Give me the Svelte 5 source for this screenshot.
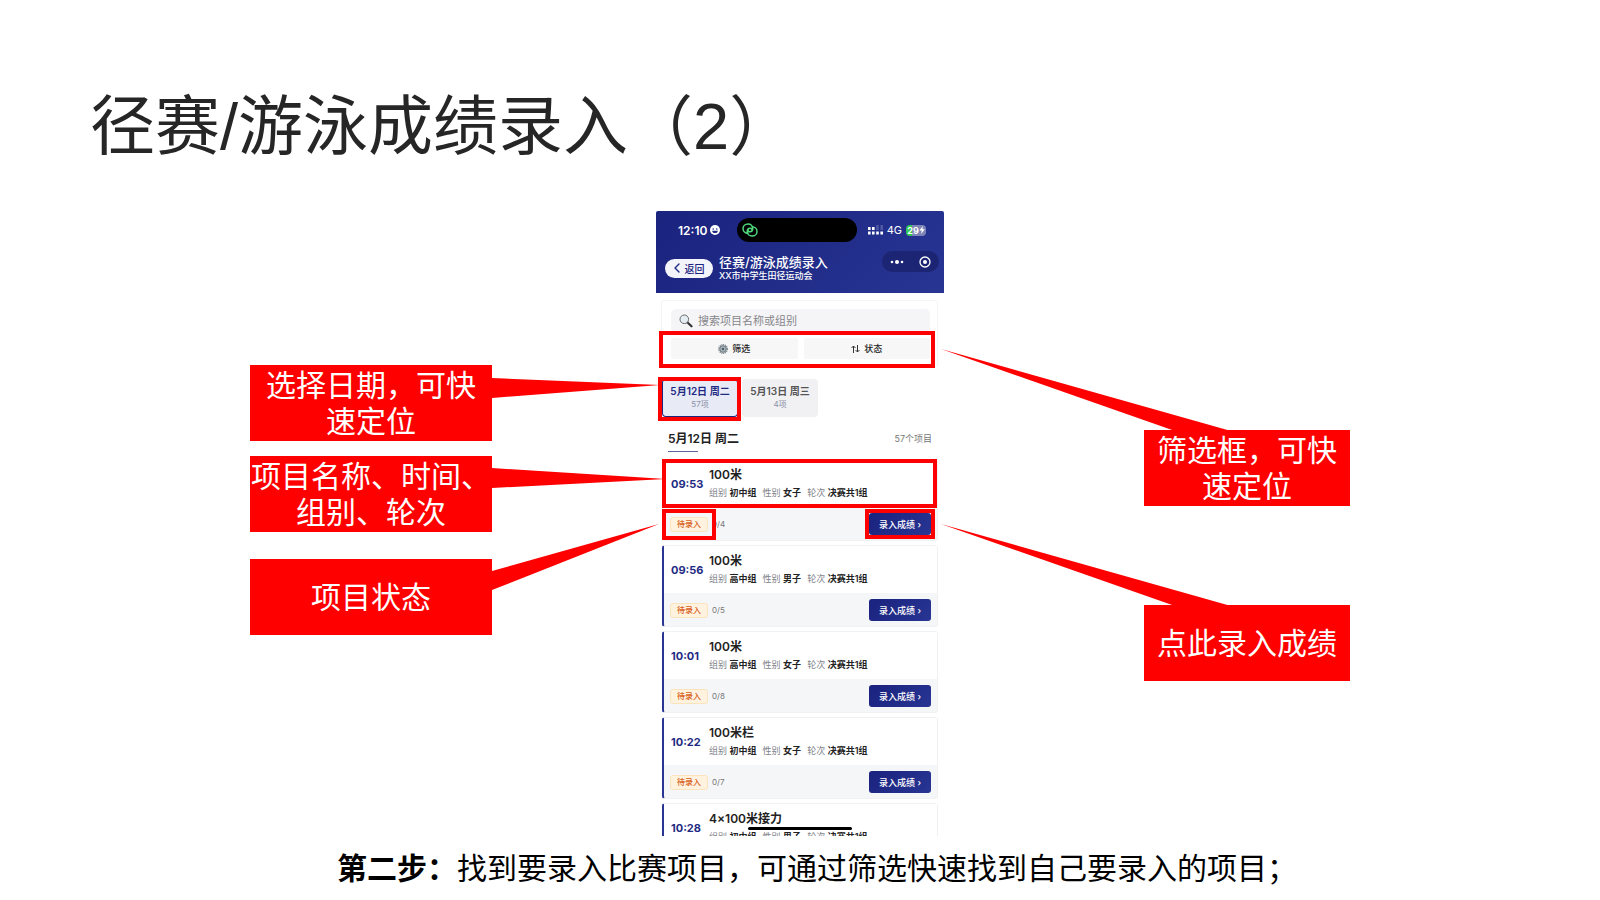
<script>
    let keyword = '';
    let activeDay = 0;

    const days = [
        { label: '5月12日 周二', count: '57项' },
        { label: '5月13日 周三', count: '4项' }
    ];

    /** @type {{time: String, name: String, group: String, sex: String, round: String, done: String}[]} */
    const events = [
        { time: '09:53', name: '100米', group: '初中组', sex: '女子', round: '决赛共1组', done: '0/4' },
        { time: '09:56', name: '100米', group: '高中组', sex: '男子', round: '决赛共1组', done: '0/5' },
        { time: '10:01', name: '100米', group: '高中组', sex: '女子', round: '决赛共1组', done: '0/8' },
        { time: '10:22', name: '100米栏', group: '初中组', sex: '女子', round: '决赛共1组', done: '0/7' },
        { time: '10:28', name: '4×100米接力', group: '初中组', sex: '男子', round: '决赛共1组', done: '' }
    ];
</script>

<main>
    <h1>径赛/游泳成绩录入（2）</h1>

    <div class="stage">
        <div class="notes left">
            <p class="note date">选择日期，可快<br />速定位
                <svg class="tail" width="168" height="76" viewBox="0 0 168 76"><path d="M0 13L168 20L0 33Z" /></svg>
            </p>
            <p class="note item">项目名称、时间、<br />组别、轮次
                <svg class="tail" width="174" height="76" viewBox="0 0 174 76"><path d="M0 12L174 23L0 32Z" /></svg>
            </p>
            <p class="note state">项目状态
                <svg class="tail" width="168" height="76" viewBox="0 0 168 76"><path d="M0 12L167 -35L0 31Z" /></svg>
            </p>
        </div>

        <section class="phone">
            <header>
                <div class="status">
                    <span class="clock">12:10</span>
                    <svg class="face" width="10" height="10" viewBox="0 0 10 10">
                        <circle cx="5" cy="5" r="5" fill="#fff" />
                        <circle cx="3.2" cy="4" r="0.8" fill="#1f2b83" />
                        <circle cx="6.8" cy="4" r="0.8" fill="#1f2b83" />
                        <path d="M2.2 5.7h5.6a2.8 2.4 0 0 1-5.6 0z" fill="#1f2b83" />
                    </svg>
                    <div class="island">
                        <svg width="16" height="14" viewBox="0 0 16 14" fill="none" stroke="#4fd97c" stroke-width="1.5" stroke-linecap="round">
                            <path d="M6 10.2C3.200 10.200 1 8.200 1 5.600C1 3 3.200 1 6 1C8.700 1 10.800 2.900 10.800 5.300C10.800 7.400 9.600 8.800 7.900 8.800C6.700 8.800 6 8 6 7" />
                            <path d="M10 3.800C12.800 3.800 15 5.800 15 8.400C15 11 12.800 13 10 13C7.300 13 5.200 11.100 5.200 8.700C5.200 6.600 6.400 5.200 8.100 5.200C9.300 5.200 10 6 10 7" />
                        </svg>
                    </div>
                    <svg class="signal" width="15" height="10" viewBox="0 0 15 10" fill="#fff">
                        <path d="M0 2h2.600v3H0zM4 2h2.600v3H4zM0 6.500h2.600v3H0zM4 6.500h2.600v3H4zM8.200 6.500h2.600v3H8.200zM12.400 6.500H15v3h-2.600z" />
                        <path d="M8.200 0h2.600v5H8.200zM12.400 0H15v5h-2.600z" opacity="0.2" />
                    </svg>
                    <span class="net">4G</span>
                    <span class="battery">29<svg width="6" height="8" viewBox="0 0 6 8"><path d="M3.800 0L0.400 4.500H2.700L2.200 8L5.700 3.300H3.400Z" fill="#fff" /></svg></span>
                </div>
                <div class="nav">
                    <button class="back" type="button">
                        <svg width="6" height="10" viewBox="0 0 6 10" fill="none" stroke="#1f2b83" stroke-width="1.4" stroke-linecap="round" stroke-linejoin="round"><path d="M5 1L1 5L5 9" /></svg>
                        返回
                    </button>
                    <div class="heading">
                        <h2>径赛/游泳成绩录入</h2>
                        <p>XX市中学生田径运动会</p>
                    </div>
                    <div class="capsule">
                        <button type="button" aria-label="更多">
                            <svg width="14" height="6" viewBox="0 0 14 6" fill="#fff"><circle cx="2" cy="3" r="1.300" /><circle cx="7" cy="3" r="2" /><circle cx="12" cy="3" r="1.300" /></svg>
                        </button>
                        <button type="button" aria-label="关闭">
                            <svg width="12" height="12" viewBox="0 0 12 12"><circle cx="6" cy="6" r="5" fill="none" stroke="#fff" stroke-width="1.300" /><circle cx="6" cy="6" r="2" fill="#fff" /></svg>
                        </button>
                    </div>
                </div>
            </header>

            <div class="search">
                <label class="field">
                    <svg width="14" height="14" viewBox="0 0 14 14" fill="none">
                        <path d="M8.500 8.500L12.500 12.300" stroke="#333" stroke-width="2.200" stroke-linecap="round" />
                        <circle cx="5.300" cy="5.300" r="4.300" fill="#e4eef2" stroke="#666b70" stroke-width="1" />
                    </svg>
                    <input type="text" aria-label="搜索" placeholder="搜索项目名称或组别" bind:value={keyword} />
                </label>
                <div class="filters marked">
                    <button type="button">
                        <svg width="10" height="10" viewBox="0 0 10 10" fill="none">
                            <circle cx="5" cy="5" r="4.300" stroke="#7d878d" stroke-width="1.300" stroke-dasharray="1.100 0.700" />
                            <circle cx="5" cy="5" r="3.300" fill="#a9b6bc" stroke="#66737a" />
                            <circle cx="5" cy="5" r="1.200" fill="#4d5960" />
                        </svg>
                        筛选
                    </button>
                    <button type="button">
                        <svg width="9" height="8" viewBox="0 0 9 8" fill="none" stroke="#333" stroke-width="1"><path d="M2.500 8V1M0.500 3L2.500 1L4.500 3M6.500 0V7M4.500 5L6.500 7L8.500 5" /></svg>
                        状态
                    </button>
                </div>
            </div>

            <div class="days">
                {#each days as day, i}
                    <button type="button" class:active={i === activeDay} class:marked={i === 0} on:click={() => (activeDay = i)}>
                        <b>{day.label}</b>
                        <span>{day.count}</span>
                    </button>
                {/each}
            </div>

            <div class="group">
                <h3>5月12日 周二</h3>
                <span>57个项目</span>
            </div>

            {#each events as event, i}
                <article class:first={i === 0}>
                    <div class="info" class:marked={i === 0}>
                        <time>{event.time}</time>
                        <div>
                            <h4>{event.name}</h4>
                            <p>
                                <span>组别 <b>{event.group}</b></span>
                                <span>性别 <b>{event.sex}</b></span>
                                <span>轮次 <b>{event.round}</b></span>
                            </p>
                        </div>
                    </div>
                    {#if event.done}
                        <div class="action">
                            <span class="badge" class:marked={i === 0}>待录入</span>
                            <span class="done">{event.done}</span>
                            <button type="button" class:marked={i === 0}>录入成绩 <i>›</i></button>
                        </div>
                    {/if}
                </article>
            {/each}

            <div class="home"></div>
        </section>

        <div class="notes right">
            <p class="note">筛选框，可快<br />速定位
                <svg class="tail" width="290" height="82" viewBox="0 0 290 82"><path d="M0 0L290 82H234Z" /></svg>
            </p>
            <p class="note">点此录入成绩
                <svg class="tail" width="290" height="82" viewBox="0 0 290 82"><path d="M0 0L290 82H234Z" /></svg>
            </p>
        </div>
    </div>

    <p class="caption"><b>第二步：</b>找到要录入比赛项目，可通过筛选快速找到自己要录入的项目；</p>
</main>

<style>
    :global(body) {
        margin: 0;
        background: #fff;
    }

    main {
        font-family: "Noto Sans CJK SC", sans-serif;
        color: #000;
    }

    h1, h2, h3, h4, p {
        margin: 0;
    }

    h1 {
        padding: 87px 90px 44px;
        font: 400 65px/80px "Liberation Sans", "Noto Sans CJK SC", sans-serif;
        color: #262626;
    }

    button {
        padding: 0;
        border: 0;
        font: inherit;
        color: inherit;
        background: none;
        white-space: nowrap;
    }

    svg {
        flex: none;
    }

    .stage {
        display: grid;
        grid-template-columns: 1fr 288px 1fr;
    }

    /* red callouts */
    .notes {
        display: flex;
        flex-direction: column;
    }

    .left {
        align-items: flex-end;
        padding: 154px 164px 0 0;
    }

    .right {
        align-items: flex-start;
        gap: 99px;
        padding: 219px 0 0 200px;
    }

    .note {
        position: relative;
        display: grid;
        place-content: center;
        box-sizing: border-box;
        width: 242px;
        height: 76px;
        padding-bottom: 4px;
        font-size: 30px;
        line-height: 36px;
        text-align: center;
        white-space: nowrap;
        color: #fff;
        background: #f00;
    }

    .right .note {
        width: 206px;
    }

    .item {
        margin: 15px 0 27px;
    }

    .tail {
        position: absolute;
        z-index: 2;
        top: 0;
        left: 100%;
        overflow: visible;
        fill: #f00;
    }

    .right .tail {
        top: -81px;
        left: -203px;
    }

    .marked {
        position: relative;
    }

    .marked::after {
        content: "";
        position: absolute;
        z-index: 1;
        border: 4px solid #f00;
        pointer-events: none;
    }

    /* phone */
    .phone {
        position: relative;
        height: 625px;
        overflow: hidden;
        font-family: Inter, "Noto Sans CJK SC", sans-serif;
        font-size: 9px;
        color: #222;
    }

    header {
        box-sizing: border-box;
        height: 82px;
        padding-top: 7px;
        border-radius: 2px 2px 0 0;
        color: #fff;
        background: linear-gradient(135deg, #1a237e, #283593);
    }

    .status {
        display: flex;
        align-items: center;
        height: 24px;
        padding: 0 18px 0 22px;
    }

    .clock {
        font-size: 12px;
        font-weight: 600;
    }

    .face {
        margin-left: 3px;
    }

    .island {
        display: flex;
        align-items: center;
        box-sizing: border-box;
        width: 120px;
        height: 24px;
        margin: 0 11px 0 auto;
        padding-left: 5px;
        border-radius: 12px;
        background: #000;
    }

    .net {
        margin: 0 4px;
        font-size: 11px;
    }

    .battery {
        display: flex;
        align-items: center;
        justify-content: center;
        width: 20px;
        height: 11px;
        border-radius: 4px;
        font-weight: 700;
        background: linear-gradient(90deg, #35c759 30%, #7e84b6 30%);
    }

    .nav {
        display: flex;
        align-items: center;
        height: 40px;
        padding: 6px 5px 0 9px;
    }

    .back {
        display: flex;
        align-items: center;
        justify-content: center;
        gap: 5px;
        width: 48px;
        height: 19px;
        border-radius: 10px;
        font-size: 10px;
        font-weight: 500;
        color: #1a237e;
        background: #f4f5fb;
    }

    .heading {
        flex: 1;
        margin-left: 6px;
        font-size: 9px;
        line-height: 12px;
        font-weight: 500;
    }

    h2 {
        font-size: 13px;
        line-height: 16px;
        font-weight: 500;
    }

    .capsule {
        display: flex;
        align-items: center;
        justify-content: space-between;
        align-self: flex-start;
        box-sizing: border-box;
        width: 57px;
        height: 21px;
        margin-top: 3px;
        padding: 0 8px;
        border-radius: 11px;
        background: #1c2573;
    }

    .capsule button {
        display: flex;
    }

    .search {
        box-sizing: border-box;
        margin: 7px 6px 0 5px;
        height: 67px;
        padding: 8px 7px 8px 9px;
        border: 1px solid #f5f5f7;
        border-radius: 3px;
    }

    .field {
        display: flex;
        align-items: center;
        gap: 5px;
        height: 24px;
        margin-bottom: 5px;
        padding-left: 8px;
        border-radius: 5px;
        background: #f5f5f7;
    }

    .field input {
        flex: 1;
        min-width: 0;
        padding: 0;
        border: 0;
        outline: 0;
        font: inherit;
        font-size: 11px;
        background: none;
    }

    .field input::placeholder {
        color: #85858a;
    }

    .filters {
        display: grid;
        grid-template-columns: 1fr 1fr;
        gap: 6px;
        height: 21px;
    }

    .filters::after {
        inset: -7px -5px -9px -12px;
    }

    .filters button {
        display: flex;
        align-items: center;
        justify-content: center;
        gap: 4px;
        border-radius: 2px;
        font-weight: 500;
        background: #f7f7f8;
    }

    .days {
        display: flex;
        gap: 4px;
        margin: 12px 6px 12px;
    }

    .days button {
        display: flex;
        flex-direction: column;
        align-items: center;
        justify-content: center;
        width: 76px;
        height: 38px;
        border-radius: 4px;
        line-height: 13px;
        color: #555;
        background: #f1f1f4;
    }

    .days .active {
        box-shadow: inset 0 0 0 1px #1a237e;
        color: #1f2b83;
        background: #e8eaf6;
    }

    .days .marked::after {
        inset: -2px -3px -4px -4px;
    }

    .days b {
        font-size: 10px;
        font-weight: 600;
    }

    .days span {
        font-size: 8px;
        color: #8c90a6;
    }

    .group {
        display: flex;
        align-items: flex-start;
        justify-content: space-between;
        margin: 0 12px 7px;
        line-height: 19px;
        color: #777;
    }

    h3 {
        font-size: 12px;
        font-weight: 600;
        color: #222;
    }

    h3::after {
        content: "";
        display: block;
        width: 30px;
        height: 1px;
        margin-top: 3px;
        background: #5c659f;
    }

    article {
        box-sizing: border-box;
        height: 82px;
        margin: 0 6px 4px;
        border: 1px solid #f0f1f3;
        border-left: 2px solid #283593;
        border-radius: 3px;
        background: #f5f6f7;
    }

    .first {
        border-left-color: #f5f6f7;
    }

    .info {
        display: flex;
        align-items: center;
        height: 47px;
        padding-left: 7px;
        background: #fff;
    }

    .info::after {
        inset: -1px 0 -1px -2px;
    }

    time {
        width: 38px;
        font-size: 11px;
        line-height: 14px;
        font-weight: 700;
        color: #1f2b83;
    }

    h4 {
        font-size: 12px;
        line-height: 18px;
        font-weight: 600;
    }

    .info p {
        display: flex;
        gap: 6px;
        line-height: 18px;
        color: #80838a;
        white-space: nowrap;
    }

    .info b {
        font-weight: 600;
        color: #222;
    }

    .action {
        display: flex;
        align-items: center;
        height: 34px;
        padding: 0 6px 0 6px;
    }

    .badge {
        box-sizing: border-box;
        width: 38px;
        height: 15px;
        border: 1px solid #fbe3bd;
        border-radius: 3px;
        font-size: 8px;
        line-height: 13px;
        font-weight: 500;
        text-align: center;
        color: #d9601a;
        background: #fff3e0;
    }

    .badge::after {
        inset: -9px;
    }

    .done {
        margin: 0 auto 0 4px;
        font-size: 8px;
        color: #777;
    }

    .action button {
        width: 62px;
        height: 22px;
        border-radius: 3px;
        font-weight: 500;
        color: #fff;
        background: linear-gradient(135deg, #1a237e, #283593);
    }

    .action button::after {
        inset: -4px;
    }

    i {
        font-style: normal;
    }

    .home {
        position: absolute;
        bottom: 6px;
        left: 92px;
        width: 104px;
        height: 3px;
        border-radius: 2px;
        background: #000;
    }

    .caption {
        margin: 8px 0 0;
        padding: 0 0 10px 337px;
        font-size: 30px;
        line-height: 44px;
    }
</style>
